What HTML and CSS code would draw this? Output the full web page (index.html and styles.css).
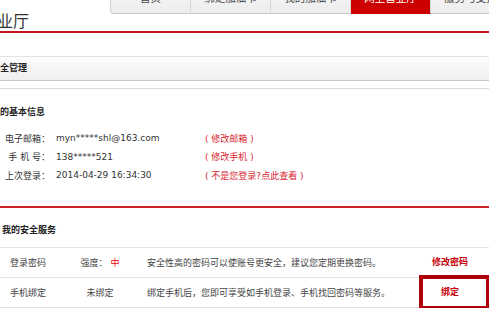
FILE: index.html
```html
<!DOCTYPE html>
<html>
    <head>
        <meta charset="UTF-8">
        <title>网上营业厅 - 安全管理</title>
        <link rel="stylesheet" href="styles.css">
    </head>
    <body>
        <div class="page">
            <div class="top">
                <ul class="nav">
                    <li class="first">首页</li>
                    <li>绑定加油卡</li>
                    <li>我的加油卡</li>
                    <li class="on">网上营业厅</li>
                    <li>服务与支持</li>
                </ul>
                <h1 class="title">网上营业厅</h1>
            </div>
            <div class="bar">安全管理</div>
            <div class="box">
                <h3>我的基本信息</h3>
                <div class="info">
                    <span class="lbl">电子邮箱：</span>
                    <span class="val">myn*****shl@163.com</span>
                    <a class="lnk">( 修改邮箱 )</a>
                    <span class="lbl">手&nbsp;机&nbsp;号：</span>
                    <span class="val">138*****521</span>
                    <a class="lnk">( 修改手机 )</a>
                    <span class="lbl">上次登录：</span>
                    <span class="val">2014-04-29 16:34:30</span>
                    <a class="lnk">( 不是您登录?点此查看 )</a>
                </div>
            </div>
            <div class="svc">
                <h3>我的安全服务</h3>
                <div class="tbl">
                    <div class="row">
                        <span class="c1">登录密码</span>
                        <span class="c2">强度： <em>中</em></span>
                        <span class="c3">安全性高的密码可以使账号更安全，建议您定期更换密码。</span>
                        <span class="c4"><a>修改密码</a></span>
                    </div>
                    <div class="row">
                        <span class="c1">手机绑定</span>
                        <span class="c2">未绑定</span>
                        <span class="c3">绑定手机后，您即可享受如手机登录、手机找回密码等服务。</span>
                        <span class="c4"><a>绑定</a><i class="mark"></i></span>
                    </div>
                </div>
            </div>
        </div>
    </body>
</html>
```

FILE: styles.css
```css
body{
    margin: 0;
    overflow: hidden;
    background: #fff;
    font-family: "DejaVu Sans", "Noto Sans CJK SC", sans-serif;
    font-size: 9px;
    color: #333;
}
.page{
    width: 540px;
    margin-left: -51px;
}
.top{
    border-bottom: 2px solid #c3151c;
}
.nav{
    list-style: none;
    margin: -17px 0 0 161px;
    padding: 0;
    display: flex;
    height: 31px;
}
.nav li{
    width: 79px;
    flex: none;
    height: 30px;
    line-height: 30px;
    text-align: center;
    font-size: 10.5px;
    color: #444;
    background: linear-gradient(#fafafa, #ececec);
    border-right: 1px solid #d6d6d6;
    border-bottom: 1px solid #c9c9c9;
}
.nav li.first{
    border-left: 1px solid #cfcfcf;
    border-bottom-left-radius: 4px;
}
.nav li.on{
    background: #cc0000;
    color: #fff;
    border-bottom-color: #cc0000;
}
.title{
    margin: -1px 0 0 0;
    padding-bottom: 1px;
    font-size: 16px;
    font-weight: normal;
    line-height: 17px;
    color: #333;
}
.bar{
    margin-top: 23px;
    padding-left: 42px;
    line-height: 23px;
    font-weight: bold;
    color: #222;
    background: linear-gradient(#fdfdfd, #efefef);
    border-top: 1px solid #e2e2e2;
    border-bottom: 1px solid #c8c8c8;
}
.box{
    margin-top: 7px;
    border-top: 1px solid #d9d9d9;
    padding: 14px 0 0 42px;
}
h3{
    margin: 0;
    font-size: 9px;
    line-height: 18px;
    font-weight: bold;
    color: #222;
}
.info{
    margin: 8px 0 0 14px;
    display: grid;
    grid-template-columns: 45px 143px auto;
    column-gap: 6px;
    grid-auto-rows: 18.5px;
    align-items: center;
}
.lbl{
    text-align: right;
    white-space: nowrap;
}
.val{
    color: #333;
}
.lnk{
    color: #d9262e;
    white-space: nowrap;
}
.svc{
    margin-top: 21px;
    border-top: 2px solid #c9232a;
    padding: 13px 0 0 51px;
}
.svc h3{
    padding-left: 2px;
}
.tbl{
    margin-top: 8px;
    margin-left: -51px;
    border-top: 1px solid #e4e4e4;
}
.row{
    display: grid;
    grid-template-columns: 61px 78px 272px 78px;
    margin-left: 51px;
    height: 29px;
    align-items: center;
    border-bottom: 1px solid #e4e4e4;
    color: #444;
}
.c1{
    padding-left: 10px;
}
.c2{
    text-align: center;
}
.c2 em{
    font-style: normal;
    color: #e00;
}
.c3{
    padding-left: 8px;
    white-space: nowrap;
}
.c4{
    text-align: center;
    position: relative;
    height: 29px;
    line-height: 29px;
}
.c4 a{
    color: #c8000a;
    font-weight: bold;
}
.mark{
    position: absolute;
    left: 8px;
    right: -1px;
    top: -3px;
    bottom: -3px;
    border: 4px solid #b0000c;
}
```
